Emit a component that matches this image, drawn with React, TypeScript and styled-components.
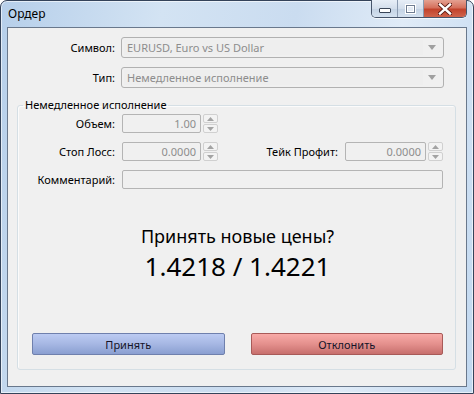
import styled, { createGlobalStyle } from "styled-components";

const GlobalStyle = createGlobalStyle`
  html, body {
    margin: 0;
    padding: 0;
  }
  body {
    width: 474px;
    height: 394px;
    overflow: hidden;
    font-family: "Noto Sans", "DejaVu Sans", sans-serif;
    font-size: 11px;
    color: #000;
  }
`;

const SpinArrow = ({ up }: { up?: boolean }) => (
  <svg width="7" height="4" viewBox="0 0 7 4">
    <path d={up ? "M0 4 L3.5 0 L7 4 Z" : "M0 0 L3.5 4 L7 0 Z"} fill="#a3a3a3" />
  </svg>
);

const Spinner = () => (
  <SpinBox>
    <SpinHalf>
      <SpinArrow up />
    </SpinHalf>
    <SpinHalf>
      <SpinArrow />
    </SpinHalf>
  </SpinBox>
);

const Combo = ({ value }: { value: string }) => (
  <ComboBox>
    <ComboValue>{value}</ComboValue>
    <ComboArrow>
      <svg width="8" height="5" viewBox="0 0 8 5">
        <path d="M0 0 L4 5 L8 0 Z" fill="#a0a0a0" />
      </svg>
    </ComboArrow>
  </ComboBox>
);

const App = () => {
  return (
    <>
      <GlobalStyle />
      <Window>
        <TitleBar>
          <Title>Ордер</Title>
          <CaptionButtons>
            <CaptionButton>
              <MinGlyph />
            </CaptionButton>
            <CaptionButton>
              <MaxGlyph />
            </CaptionButton>
            <CloseButton>
              <svg width="14" height="12" viewBox="0 0 14 12">
                <path
                  d="M2 1.5 L12 10.5 M12 1.5 L2 10.5"
                  stroke="#5a1a12"
                  strokeWidth="4.2"
                  strokeLinecap="square"
                />
                <path
                  d="M2 1.5 L12 10.5 M12 1.5 L2 10.5"
                  stroke="#ffffff"
                  strokeWidth="2.4"
                  strokeLinecap="square"
                />
              </svg>
            </CloseButton>
          </CaptionButtons>
        </TitleBar>

        <Client>
          <TopFields>
            <Label>Символ:</Label>
            <Combo value="EURUSD, Euro vs US Dollar" />
            <Label>Тип:</Label>
            <Combo value="Немедленное исполнение" />
          </TopFields>

          <Group>
            <Legend>Немедленное исполнение</Legend>
            <GroupRows>
              <Row>
                <RowLabel>Объем:</RowLabel>
                <NumField>1.00</NumField>
                <Spinner />
              </Row>
              <Row>
                <RowLabel>Стоп Лосс:</RowLabel>
                <NumField>0.0000</NumField>
                <Spinner />
                <Spacer />
                <SideLabel>Тейк Профит:</SideLabel>
                <NumField wide>0.0000</NumField>
                <Spinner />
              </Row>
              <Row>
                <RowLabel>Комментарий:</RowLabel>
                <TextField />
              </Row>
            </GroupRows>

            <Question>Принять новые цены?</Question>
            <Prices>1.4218 / 1.4221</Prices>

            <Buttons>
              <ActionButton tone="accept">Принять</ActionButton>
              <ActionButton tone="reject">Отклонить</ActionButton>
            </Buttons>
          </Group>
        </Client>
      </Window>
    </>
  );
};

export default App;

const Window = styled.div`
  width: 474px;
  height: 394px;
  box-sizing: border-box;
  border: 1px solid #34435a;
  border-radius: 7px 7px 0 0;
  padding: 0 6px 6px;
  display: flex;
  flex-direction: column;
  background: linear-gradient(
    100deg,
    #b6cfea 0%,
    #d3e3f3 30%,
    #cadcf0 55%,
    #e0ebf7 75%,
    #c1d8f0 100%
  );
  box-shadow: inset 0 0 0 1px rgba(255, 255, 255, 0.6);
`;

const TitleBar = styled.div`
  height: 26px;
  display: flex;
  justify-content: space-between;
  align-items: flex-start;
`;

const Title = styled.div`
  padding: 5px 0 0 1px;
  line-height: 16px;
  font-size: 12px;
`;

const CaptionButtons = styled.div`
  display: flex;
  margin-top: -1px;
  height: 18px;
  box-sizing: border-box;
  border: 1px solid #47556b;
  border-top: none;
  border-radius: 0 0 5px 5px;
  overflow: hidden;
  box-shadow: 0 1px 0 rgba(255, 255, 255, 0.7);
`;

const CaptionButton = styled.div`
  width: 25px;
  display: flex;
  align-items: center;
  justify-content: center;
  border-right: 1px solid #8a9ab0;
  background: linear-gradient(#e7eef7 0%, #d3deec 50%, #c3d2e4 51%, #d5e2f0 100%);
`;

const CloseButton = styled.div`
  width: 42px;
  display: flex;
  align-items: center;
  justify-content: center;
  background: linear-gradient(#e4a191 0%, #d5705c 45%, #c2432c 55%, #d0644c 100%);
`;

const MinGlyph = styled.div`
  width: 10px;
  height: 3px;
  margin-top: 3px;
  border: 1px solid #3a4658;
  border-radius: 1px;
  background: #fff;
`;

const MaxGlyph = styled.div`
  width: 7px;
  height: 6px;
  border: 1px solid #6f7d92;
  box-shadow: inset 0 0 0 1px #fff, 0 0 0 1px #fff;
  background: #e4ebf4;
`;

const Client = styled.div`
  flex: 1;
  display: flex;
  flex-direction: column;
  border: 1px solid #69788c;
  background: #f0f0f0;
  min-height: 0;
`;

const TopFields = styled.div`
  display: grid;
  grid-template-columns: 107px 1fr;
  column-gap: 6px;
  row-gap: 9px;
  padding: 9px 22px 0 0;
`;

const Label = styled.div`
  align-self: center;
  text-align: right;
  white-space: nowrap;
  line-height: 16px;
`;

const ComboBox = styled.div`
  height: 21px;
  box-sizing: border-box;
  display: flex;
  align-items: stretch;
  padding: 2px;
  border: 1px solid #b1b1b1;
  border-radius: 3px;
  background: #f0f0f0;
`;

const ComboValue = styled.div`
  flex: 1;
  padding-left: 3px;
  line-height: 15px;
  color: #8d8d8d;
  background: #eeeeee;
  white-space: nowrap;
`;

const ComboArrow = styled.div`
  width: 18px;
  display: flex;
  align-items: center;
  justify-content: center;
`;

const Group = styled.fieldset`
  flex: 1;
  display: flex;
  flex-direction: column;
  margin: 10px 10px 16px 9px;
  padding: 2px 12px 14px 0;
  border: 1px solid #d5dfe5;
  border-radius: 3px;
  box-shadow: inset 1px 1px 0 #fbfbfb;
  min-width: 0;
`;

const Legend = styled.legend`
  margin-left: 5px;
  padding: 0 2px;
  line-height: 14px;
  font-size: 11px;
`;

const GroupRows = styled.div`
  display: flex;
  flex-direction: column;
  gap: 9px;
`;

const Row = styled.div`
  display: flex;
  align-items: center;
  height: 19px;
`;

const RowLabel = styled.div`
  width: 97px;
  margin-right: 7px;
  text-align: right;
  white-space: nowrap;
`;

const SideLabel = styled.div`
  margin-right: 7px;
  white-space: nowrap;
`;

const Spacer = styled.div`
  flex: 1;
`;

const NumField = styled.div<{ wide?: boolean }>`
  width: ${(props) => (props.wide ? "81px" : "79px")};
  height: 19px;
  box-sizing: border-box;
  margin-right: 2px;
  padding-right: 4px;
  border: 1px solid #b4b4b4;
  border-radius: 2px;
  background: #f0f0f0;
  color: #8d8d8d;
  text-align: right;
  line-height: 17px;
`;

const TextField = styled.div`
  flex: 1;
  height: 19px;
  box-sizing: border-box;
  border: 1px solid #b4b4b4;
  border-radius: 2px;
  background: #f0f0f0;
`;

const SpinBox = styled.div`
  width: 15px;
  height: 19px;
  display: flex;
  flex-direction: column;
  gap: 1px;
`;

const SpinHalf = styled.div`
  flex: 1;
  display: flex;
  align-items: center;
  justify-content: center;
  box-sizing: border-box;
  border: 1px solid #d0d0d0;
  border-radius: 2px;
  background: #f3f3f3;
`;

const Question = styled.div`
  margin-top: 35px;
  padding-left: 14px;
  text-align: center;
  font-size: 18px;
  line-height: 24px;
`;

const Prices = styled.div`
  margin-top: 1px;
  padding-left: 14px;
  text-align: center;
  font-size: 26px;
  line-height: 35px;
`;

const Buttons = styled.div`
  margin-top: auto;
  padding-left: 14px;
  display: flex;
  gap: 26px;
`;

const ActionButton = styled.div<{ tone: "accept" | "reject" }>`
  flex: 1;
  height: 22px;
  box-sizing: border-box;
  border: 1px solid ${(props) => (props.tone === "accept" ? "#6f80ad" : "#a85a58")};
  border-radius: 2px;
  background: ${(props) =>
    props.tone === "accept"
      ? "linear-gradient(#bccbf2 0%, #a6b7e3 50%, #8a9fd1 100%)"
      : "linear-gradient(#f8aaa7 0%, #e4908d 50%, #c76f6d 100%)"};
  display: flex;
  align-items: center;
  justify-content: center;
  color: #141428;
  font-size: 11px;
`;
